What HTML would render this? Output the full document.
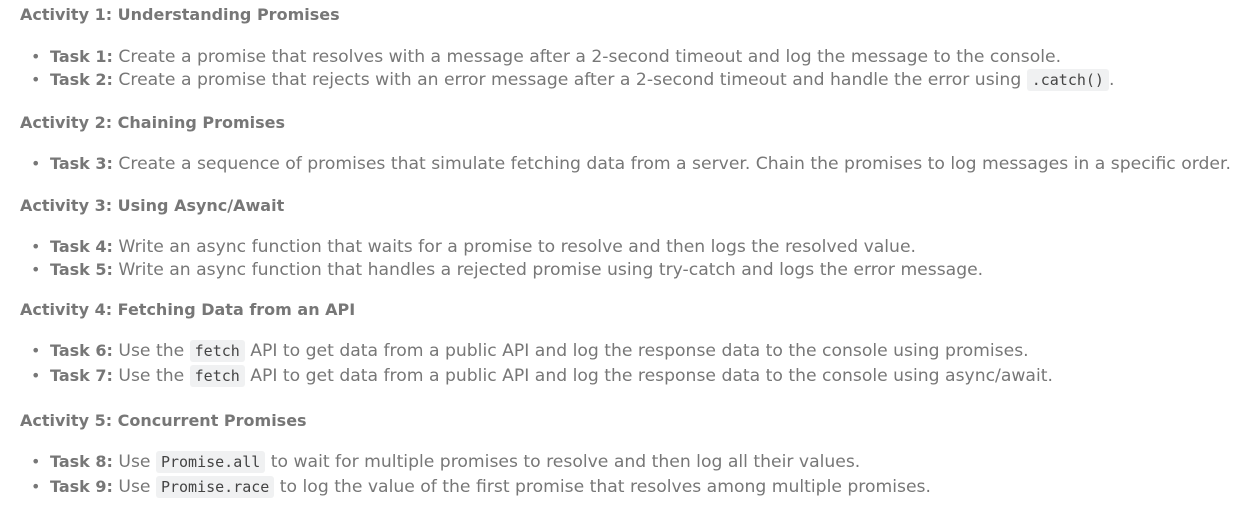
<!DOCTYPE html>
<html><head><meta charset="utf-8"><style>
body{margin:0;width:1241px;height:510px;background:#fff;font-family:"DejaVu Sans","Liberation Sans",sans-serif;color:#777;font-size:17.2px;position:relative;overflow:hidden}
.l{position:absolute;white-space:nowrap;line-height:22px}
.h{left:20px;font-weight:bold;color:#777;font-size:16px}
.t{left:31px}
.t:before{content:"•";display:inline-block;width:19px;font-size:16px}
b{font-weight:bold;font-size:16px}
code{font-family:"DejaVu Sans Mono","Liberation Mono",monospace;font-size:15px;background:#f0f1f2;color:#444;padding:2px 5px;border-radius:3px}
</style></head><body>
<div class="l h" style="top:4px">Activity 1: Understanding Promises</div>
<div class="l t" style="top:46px"><b>Task 1:</b> Create a promise that resolves with a message after a 2-second timeout and log the message to the console.</div>
<div class="l t" style="top:69px"><b>Task 2:</b> Create a promise that rejects with an error message after a 2-second timeout and handle the error using <code>.catch()</code>.</div>
<div class="l h" style="top:112px">Activity 2: Chaining Promises</div>
<div class="l t" style="top:153px"><b>Task 3:</b> Create a sequence of promises that simulate fetching data from a server. Chain the promises to log messages in a specific order.</div>
<div class="l h" style="top:195px">Activity 3: Using Async/Await</div>
<div class="l t" style="top:236px"><b>Task 4:</b> Write an async function that waits for a promise to resolve and then logs the resolved value.</div>
<div class="l t" style="top:259px"><b>Task 5:</b> Write an async function that handles a rejected promise using try-catch and logs the error message.</div>
<div class="l h" style="top:299px">Activity 4: Fetching Data from an API</div>
<div class="l t" style="top:340px"><b>Task 6:</b> Use the <code>fetch</code> API to get data from a public API and log the response data to the console using promises.</div>
<div class="l t" style="top:365px"><b>Task 7:</b> Use the <code>fetch</code> API to get data from a public API and log the response data to the console using async/await.</div>
<div class="l h" style="top:410px">Activity 5: Concurrent Promises</div>
<div class="l t" style="top:451px"><b>Task 8:</b> Use <code>Promise.all</code> to wait for multiple promises to resolve and then log all their values.</div>
<div class="l t" style="top:476px"><b>Task 9:</b> Use <code>Promise.race</code> to log the value of the first promise that resolves among multiple promises.</div>
</body></html>
